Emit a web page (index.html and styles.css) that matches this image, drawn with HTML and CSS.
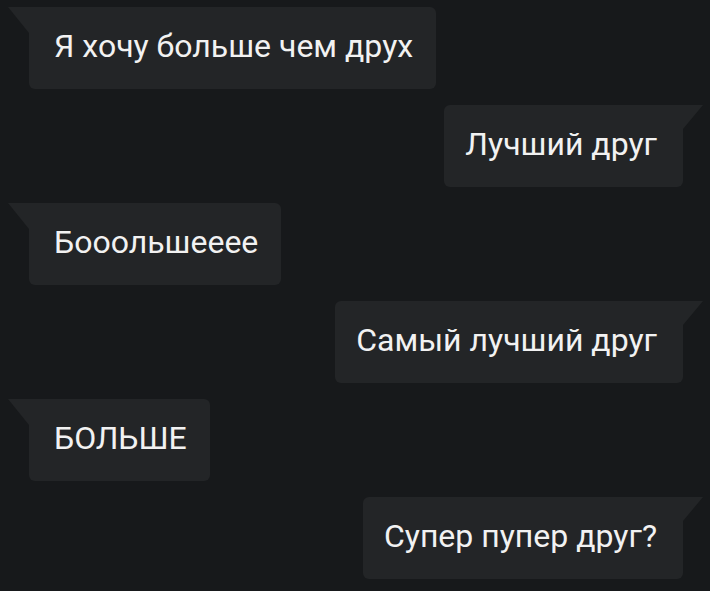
FILE: index.html
```html
<!DOCTYPE html>
<html>
<head>
    <meta charset="utf-8">
    <title>Chat</title>
    <link rel="stylesheet" href="styles.css">
</head>
<body>
    <div class="chat">
        <div class="msg in">Я хочу больше чем друх</div>
        <div class="msg out">Лучший друг</div>
        <div class="msg in">Бооольшееее</div>
        <div class="msg out">Самый лучший друг</div>
        <div class="msg in">БОЛЬШЕ</div>
        <div class="msg out">Супер пупер друг?</div>
    </div>
</body>
</html>
```

FILE: styles.css
```css
:root {
    --background-color: #17191b;
    --bubble-bg: #232527;
    --text-color: #f2f2f2;
}
* {
    box-sizing: border-box;
}
body {
    margin: 0;
    padding: 0;
    background-color: var(--background-color);
    color: var(--text-color);
    font-family: Roboto, "Noto Sans", sans-serif;
    height: 591px;
    overflow: hidden;
}
.chat {
    display: flex;
    flex-direction: column;
    gap: 16px;
    padding: 7px 27px 0 29px;
}
.msg {
    position: relative;
    display: flex;
    align-items: center;
    height: 82px;
    padding-bottom: 4px;
    background-color: var(--bubble-bg);
    border-radius: 6px;
    font-size: 32px;
    line-height: 1;
}
.msg.in {
    align-self: flex-start;
    padding-left: 25px;
    padding-right: 23px;
    border-top-left-radius: 0;
}
.msg.out {
    align-self: flex-end;
    padding-left: 21px;
    padding-right: 26px;
    border-top-right-radius: 0;
}
.msg::before {
    content: "";
    position: absolute;
    top: 0;
    width: 21px;
    height: 26px;
    background-color: var(--bubble-bg);
}
.msg.in::before {
    left: -21px;
    clip-path: polygon(0 0, 100% 0, 100% 100%);
}
.msg.out::before {
    right: -20px;
    width: 20px;
    height: 24px;
    clip-path: polygon(0 0, 100% 0, 0 100%);
}
```
